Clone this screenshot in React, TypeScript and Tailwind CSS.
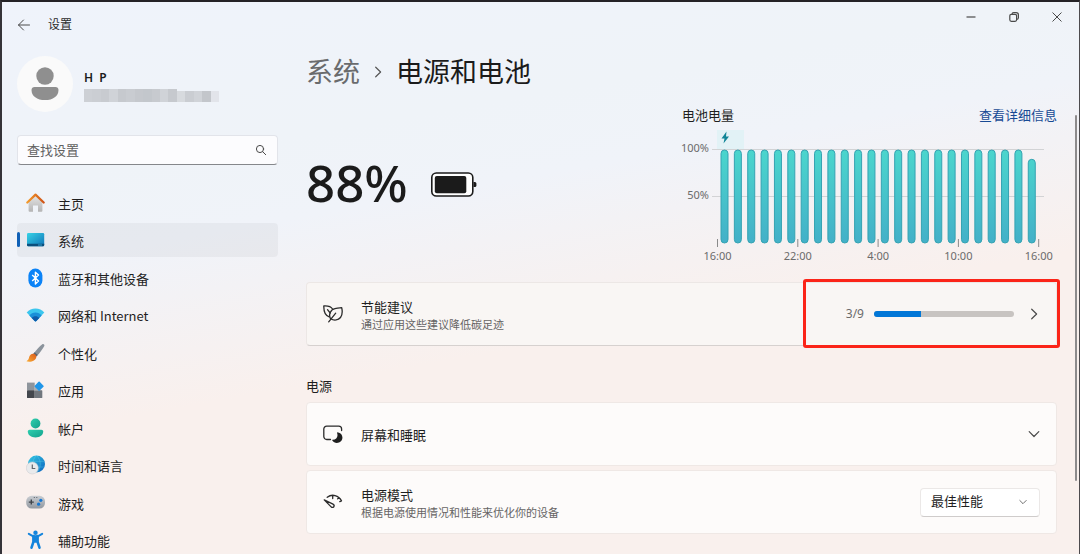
import { useState, type ReactNode } from 'react';
import clsx from 'clsx';

interface NavItem {
  id: string;
  label: string;
  icon: ReactNode;
}

const NAV_ITEMS: NavItem[] = [
  { id: 'home', label: '主页', icon: <HomeIcon /> },
  { id: 'system', label: '系统', icon: <SystemIcon /> },
  { id: 'bluetooth', label: '蓝牙和其他设备', icon: <BluetoothIcon /> },
  { id: 'network', label: '网络和 Internet', icon: <NetworkIcon /> },
  { id: 'personalization', label: '个性化', icon: <BrushIcon /> },
  { id: 'apps', label: '应用', icon: <AppsIcon /> },
  { id: 'accounts', label: '帐户', icon: <AccountIcon /> },
  { id: 'time', label: '时间和语言', icon: <TimeIcon /> },
  { id: 'gaming', label: '游戏', icon: <GamingIcon /> },
  { id: 'accessibility', label: '辅助功能', icon: <AccessibilityIcon /> },
];

// Battery level for each of the last 24 hours
const LEVELS = [...Array(23).fill(100), 90];
const TIME_LABELS = ['16:00', '22:00', '4:00', '10:00', '16:00'];

// Mosaic tiles that hide the account's mail address
const MASK_TILES = ['bg-[#cdd0d5]', 'bg-[#cbced3]', 'bg-[#c8cbd0]', 'bg-[#d0d3d8]', 'bg-[#c6c9ce]', 'bg-[#c9ccd1]', 'bg-[#c5c8cd]', 'bg-[#c3c7cc]', 'bg-[#c7cacf]', 'bg-[#d0d3d8]', 'bg-[#c6c9ce]', 'bg-[#d7dade]', 'bg-[#cacdd2]', 'bg-[#d0d3d8]', 'bg-[#c3c6cb]', 'bg-[#e2e4ea]'];

function HomeIcon() {
  return (
    <svg viewBox="0 0 20 20" className="h-5 w-5">
      <defs>
        <linearGradient id="homeBody" x1="0" y1="0" x2="0" y2="1">
          <stop offset="0" stopColor="#e6e6e6" />
          <stop offset="1" stopColor="#b4b4b4" />
        </linearGradient>
        <linearGradient id="homeRoof" x1="0" y1="0" x2="1" y2="0">
          <stop offset="0" stopColor="#f39a2b" />
          <stop offset="1" stopColor="#cf5316" />
        </linearGradient>
      </defs>
      <path d="M2.6 8.6 9.5 2l6.9 6.6v9.2a1 1 0 0 1-1 1H12v-6.2H7v6.2H3.600a1 1 0 0 1-1-1z" fill="url(#homeBody)" />
      <path d="M1.300 9.500 9.500 1.600l8.200 7.900" fill="none" stroke="url(#homeRoof)" strokeWidth="2.200" strokeLinecap="round" strokeLinejoin="round" />
    </svg>
  );
}

function SystemIcon() {
  return (
    <svg viewBox="0 0 20 20" className="h-5 w-5">
      <defs>
        <linearGradient id="sysScreen" x1="0" y1="0" x2="1" y2="1">
          <stop offset="0" stopColor="#37d3e6" />
          <stop offset="1" stopColor="#0f74b8" />
        </linearGradient>
      </defs>
      <rect x="1" y="3" width="17.200" height="13.200" rx="1.200" fill="url(#sysScreen)" />
      <path d="M1 13.800h17.200V15a1.200 1.200 0 0 1-1.200 1.200H2.200A1.200 1.200 0 0 1 1 15z" fill="#0c4f7c" />
      <path d="M12 15h4" stroke="#3bb4e0" strokeWidth=".8" />
    </svg>
  );
}

function BluetoothIcon() {
  return (
    <svg viewBox="0 0 20 20" className="h-5 w-5">
      <rect x="2.400" y=".6" width="14" height="19" rx="7" fill="#0b83f7" />
      <path d="m6.200 7 6.300 6-3.100 2.900V4.200l3.100 2.900-6.300 6" fill="none" stroke="#fff" strokeWidth="1.400" strokeLinejoin="round" />
    </svg>
  );
}

function NetworkIcon() {
  return (
    <svg viewBox="0 0 20 20" className="h-5 w-5">
      <path d="M.7 7.600C3 5 6 3.500 9.500 3.500s6.500 1.500 8.800 4.100L10.300 16.100a1.100 1.100 0 0 1-1.600 0z" fill="#3cc6ee" />
      <path d="M3.300 10.400C5 8.600 7 7.500 9.500 7.500s4.500 1.100 6.200 2.900l-5.400 5.700a1.100 1.100 0 0 1-1.600 0z" fill="#1a8fd8" />
      <path d="M5.700 12.900c1-1.100 2.300-1.700 3.800-1.700s2.800.6 3.800 1.700l-3 3.200a1.100 1.100 0 0 1-1.600 0z" fill="#0f5ba9" />
    </svg>
  );
}

function BrushIcon() {
  return (
    <svg viewBox="0 0 20 20" className="h-5 w-5">
      <defs>
        <linearGradient id="brushTip" x1="0" y1="1" x2="1" y2="0">
          <stop offset="0" stopColor="#f9ad35" />
          <stop offset="1" stopColor="#dc5a1c" />
        </linearGradient>
      </defs>
      <path d="M16.300 1.200c1.100-.8 2.700.4 2 1.900-1.500 3-4.300 6.700-7.400 9.800l-3-2.700c2.600-3.300 5.600-6.800 8.400-9z" fill="#8b939c" />
      <path d="m8.600 9.300 3.100 2.800-1.600 1.600-3-2.800z" fill="#5c646e" />
      <path d="M7 10.800c1.800-.2 3.500 1.300 3.300 3.100-.3 3.200-4.500 5.300-9.200 4.600-.5-.1-.5-.6-.1-.8 1.500-.8 1.700-2 2.200-3.700.5-1.900 1.900-3 3.800-3.200z" fill="url(#brushTip)" />
    </svg>
  );
}

function AppsIcon() {
  return (
    <svg viewBox="0 0 20 20" className="h-5 w-5">
      <rect x="1" y="2.600" width="7.700" height="7.700" fill="#8f959c" />
      <rect x="1" y="10.300" width="7.700" height="7.700" rx=".6" fill="#43474d" />
      <rect x="8.700" y="10.300" width="7.600" height="7.700" rx=".6" fill="#71777e" />
      <rect x="8.700" y="6" width="4" height="4.300" fill="#a9aeb4" />
      <rect x="9.600" y="2.700" width="7" height="7" rx=".8" transform="rotate(45 13.100 6.200)" fill="#2196e8" />
    </svg>
  );
}

function AccountIcon() {
  return (
    <svg viewBox="0 0 20 20" className="h-5 w-5">
      <defs>
        <linearGradient id="account" x1="0" y1="0" x2="1" y2="1">
          <stop offset="0" stopColor="#2fcfae" />
          <stop offset="1" stopColor="#12a08c" />
        </linearGradient>
      </defs>
      <circle cx="9.500" cy="5.500" r="4.900" fill="url(#account)" />
      <path d="M3.600 11.800h11.800c1.100 0 1.800.8 1.800 1.800 0 3.600-3.300 5.900-7.700 5.900s-7.700-2.300-7.700-5.900c0-1 .7-1.800 1.800-1.800z" fill="url(#account)" />
    </svg>
  );
}

function TimeIcon() {
  return (
    <svg viewBox="0 0 20 20" className="h-5 w-5">
      <defs>
        <linearGradient id="globe" x1="0" y1="0" x2="1" y2="1">
          <stop offset="0" stopColor="#36c9e4" />
          <stop offset="1" stopColor="#0b62bd" />
        </linearGradient>
      </defs>
      <circle cx="10.500" cy="9" r="8.500" fill="url(#globe)" />
      <path d="M3 6.300h15M2.500 12h16M10.500.5c-5 4.500-5 12.500 0 17M10.500.5c5 4.500 5 12.500 0 17" fill="none" stroke="#6fdcf2" strokeWidth=".6" opacity=".5" />
      <circle cx="6.300" cy="13" r="6" fill="#e9eaec" stroke="#c9cbce" strokeWidth=".5" />
      <path d="M6.300 9.600v3.900h3" fill="none" stroke="#60656b" strokeWidth="1.200" />
    </svg>
  );
}

function GamingIcon() {
  return (
    <svg viewBox="0 0 20 20" className="h-5 w-5">
      <defs>
        <linearGradient id="pad" x1="0" y1="0" x2="0" y2="1">
          <stop offset="0" stopColor="#c9cdd2" />
          <stop offset="1" stopColor="#9298a0" />
        </linearGradient>
      </defs>
      <rect x=".2" y="2.800" width="18.800" height="12.800" rx="5.500" fill="url(#pad)" />
      <path d="M5.300 6.600v5M2.800 9.100h5" stroke="#3f444a" strokeWidth="1.400" />
      <circle cx="14.800" cy="7.300" r="1.600" fill="#1477d4" />
      <circle cx="12.600" cy="11.200" r="1.600" fill="#1477d4" />
      <path d="M7.800 4.500h1M10.300 4.500h1" stroke="#5a6067" strokeWidth="1" />
    </svg>
  );
}

function AccessibilityIcon() {
  return (
    <svg viewBox="0 0 20 20" className="h-5 w-5">
      <circle cx="9.500" cy="2.800" r="2.200" fill="#1484dc" />
      <path d="m2.800 3.800 4.500 2.500h4.400l4.500-2.500" fill="none" stroke="#1484dc" strokeWidth="2" strokeLinecap="round" strokeLinejoin="round" />
      <path d="M7.500 6v5.600l-2 6.100M11.500 6v5.600l2 6.100" fill="none" stroke="#1484dc" strokeWidth="2.600" strokeLinecap="round" />
      <path d="M6.500 5.800h6v6.600l-3 .4-3-.4z" fill="#1484dc" />
    </svg>
  );
}

function Chevron({ direction, className }: { direction: 'right' | 'down'; className?: string }) {
  return (
    <svg viewBox="0 0 12 12" className={clsx('shrink-0', className)} fill="none" stroke="currentColor" strokeWidth="1.200" strokeLinecap="round" strokeLinejoin="round">
      <path d={direction === 'right' ? 'm3.700 1.200 4.900 4.800-4.900 4.800' : 'M1.200 3.700 6 8.500l4.800-4.800'} />
    </svg>
  );
}

function LeafIcon() {
  return (
    <svg viewBox="0 0 20 20" className="h-5 w-5 shrink-0" fill="none" stroke="#2b2b2b" strokeWidth="1.300" strokeLinecap="round" strokeLinejoin="round">
      <path d="M6.200 12.800C2.300 11.700.7 8 .8 2c3.400-.2 7 .2 8.700 3" />
      <path d="M7.500 14.800C5.200 10.300 7.900 5.100 12 4.600c2.500-.3 4-1 6.700-1 .8 3.600.6 7.600-1.200 9.900-2.200 2.700-6.300 3.300-10 1.300z" />
      <path d="m5.700 17.800 7-8.600M4.500 5.700l2.700 3.300" />
    </svg>
  );
}

function ScreenSleepIcon() {
  return (
    <svg viewBox="0 0 20 20" className="h-5 w-5 shrink-0">
      <path d="M7.500 15.500H3.700A2.900 2.900 0 0 1 .8 12.600V5a2.900 2.900 0 0 1 2.900-2.900h12A2.900 2.900 0 0 1 18.600 5v1.500" fill="none" stroke="#2b2b2b" strokeWidth="1.300" strokeLinecap="round" />
      <path d="M14.600 8.200c4.700.6 6.300 5.700 3.300 9-2.500 2.600-6.800 2.200-8.600-.7-.2-.4 0-.7.4-.7 3.700 0 5.700-3 4.400-6.900-.1-.4.100-.7.500-.7z" fill="#1f1f1f" />
    </svg>
  );
}

function GaugeIcon() {
  return (
    <svg viewBox="0 0 20 20" className="h-5 w-5 shrink-0" fill="none" stroke="#2b2b2b" strokeWidth="1.300" strokeLinecap="round" strokeLinejoin="round">
      <path d="M4.200 5.300c4.700-3.700 11.500-2.200 14.300 3.500l-1.700.8M9.700 3.500v3M15.800 5.700l-1.200 1.200" />
      <path d="M1.200 7.900 10 12.100c2.300 1.300.6 4.300-1.600 3z" />
    </svg>
  );
}

function BatteryIcon() {
  return (
    <svg viewBox="0 0 48 28" className="h-7 w-12">
      <rect x="1.800" y="2" width="41" height="23" rx="4.500" fill="#fff" stroke="#1b1b1b" strokeWidth="1.600" />
      <rect x="4.800" y="5" width="31.500" height="17.200" rx="2" fill="#1b1b1b" />
      <path d="M43.500 11h1.400a1.500 1.500 0 0 1 1.500 1.500v2a1.500 1.500 0 0 1-1.500 1.500h-1.400z" fill="#1b1b1b" />
    </svg>
  );
}

function BatteryChart() {
  return (
    <svg viewBox="0 0 375 140" className="block h-[140px] w-[375px] overflow-visible text-[11px]" role="img">
      <defs>
        <linearGradient id="bar" gradientUnits="userSpaceOnUse" x1="0" y1="25" x2="0" y2="119">
          <stop offset="0" stopColor="#4bd6cd" />
          <stop offset="1" stopColor="#43b0c8" />
        </linearGradient>
      </defs>
      <rect x="35" y="6" width="27" height="19" fill="#e2f2f6" />
      <path d="M44.500 7.500 39.500 14.500h3l-1 5 5.500-7h-3z" fill="#108597" />
      <path d="M30 25.500h332M30 72.500h332" stroke="#d2d3d5" />
      {LEVELS.map((level, i) => {
        const height = (level / 100) * 93;
        return (
          <rect
            key={i}
            x={39 + i * 13.36}
            y={119 - height}
            width="7"
            height={height}
            rx="3.500"
            fill="url(#bar)"
            stroke="#35a3b2"
          />
        );
      })}
      <g fill="#6b6b6b">
        <text x="27" y="28" textAnchor="end">100%</text>
        <text x="27" y="75" textAnchor="end">50%</text>
        {TIME_LABELS.map((label, i) => (
          <g key={i}>
            <path d={`M${35.500 + i * 80.300} 115v8`} stroke="#8a8a8a" />
            <text x={35.500 + i * 80.300} y="136" textAnchor="middle">{label}</text>
          </g>
        ))}
      </g>
    </svg>
  );
}

function TitleBar() {
  return (
    <header className="flex h-[54px] shrink-0 items-start justify-between">
      <div className="flex h-[46px] items-center gap-[17px] pl-[15px]">
        <button aria-label="返回" className="text-[#4a4a4a]">
          <svg viewBox="0 0 14 14" className="h-[14px] w-[14px]" fill="none" stroke="currentColor" strokeLinecap="round" strokeLinejoin="round">
            <path d="M12.500 7h-11M6.500 2l-5 5 5 5" />
          </svg>
        </button>
        <span className="text-[12px] leading-4 text-[#2b2b2b]">设置</span>
      </div>
      <div className="flex pr-px text-[#4a4a4a]">
        <button aria-label="最小化" className="flex h-[30px] w-[43px] items-center justify-center">
          <svg viewBox="0 0 12 12" className="h-3 w-3" fill="none" stroke="currentColor" strokeWidth="1.200">
            <path d="M1.500 6h9" />
          </svg>
        </button>
        <button aria-label="还原" className="flex h-[30px] w-[43px] items-center justify-center">
          <svg viewBox="0 0 12 12" className="h-3 w-3" fill="none" stroke="currentColor" strokeWidth="1.200">
            <rect x="1.800" y="3.300" width="6.800" height="7" rx="1.500" />
            <path d="M4 3.200c.1-.9.700-1.500 1.600-1.500h2.600c1.300 0 2.200.9 2.200 2.200v2.900c0 .9-.6 1.500-1.600 1.600" />
          </svg>
        </button>
        <button aria-label="关闭" className="flex h-[30px] w-[43px] items-center justify-center">
          <svg viewBox="0 0 12 12" className="h-3 w-3" fill="none" stroke="currentColor">
            <path d="m1.500 1.500 9 9M10.500 1.500l-9 9" />
          </svg>
        </button>
      </div>
    </header>
  );
}

function Sidebar() {
  const [active, setActive] = useState('system');

  return (
    <aside className="w-[261px] shrink-0">
      <div className="flex items-center gap-[11px]">
        <div className="flex h-14 w-14 items-center justify-center rounded-full bg-[#fafafa]">
          <svg viewBox="0 0 28 34" className="h-[34px] w-7" fill="#8f8f8f">
            <circle cx="14" cy="9" r="8.700" />
            <path d="M3.500 20h21c1.700 0 3 1.200 3 2.900C27.500 29 22 33 14 33S.5 29 .5 22.900C.5 21.200 1.800 20 3.500 20z" />
          </svg>
        </div>
        <div className="pt-[3px]">
          <div className="text-[12px] leading-4 font-semibold text-[#1b1b1b]">H&nbsp;&nbsp;P</div>
          <div className="mt-[3px] flex h-[13px] w-[135px]">
            {MASK_TILES.map((color, i) => (
              <span key={i} className={clsx('flex-1', color, i > 10 && 'mt-[2px]')} />
            ))}
          </div>
        </div>
      </div>

      <label className="mt-[23px] flex h-[30px] items-center rounded border border-[#e2e4ea] border-b-[#85878b] bg-[#fcfcfe] pr-[10px] pl-[9px]">
        <input
          type="text"
          aria-label="查找设置"
          placeholder="查找设置"
          className="min-w-0 flex-1 bg-transparent text-[13px] leading-[18px] text-[#1b1b1b] outline-none placeholder:text-[#616161]"
        />
        <svg viewBox="0 0 12 12" className="h-3 w-3" fill="none" stroke="#4a4a4a" strokeLinecap="round">
          <circle cx="5" cy="5" r="3.600" />
          <path d="m7.700 7.700 3 3" />
        </svg>
      </label>

      <nav className="mt-[21px]">
        {NAV_ITEMS.map((item) => (
          <button
            key={item.id}
            onClick={() => setActive(item.id)}
            className={clsx(
              "relative flex h-[34px] w-full items-center gap-3 rounded pl-[9px] text-left font-['Noto_Sans_CJK_SC',sans-serif] text-[13px] leading-[18px] text-[#1f1f1f] odd:mb-[3px] even:mb-1",
              active === item.id && 'bg-black/[0.04]'
            )}
          >
            {active === item.id && (
              <span className="absolute top-[9px] left-0 h-[15px] w-[3px] rounded-full bg-[#0f60b6]" />
            )}
            {item.icon}
            <span className="pt-px">{item.label}</span>
          </button>
        ))}
      </nav>
    </aside>
  );
}

function CardText({ title, detail }: { title: string; detail?: string }) {
  return (
    <span className="flex min-w-0 flex-1 flex-col pt-[3px]">
      <span className="text-[13px] leading-[17px] text-[#1f1f1f]">{title}</span>
      {detail && <span className="text-[11px] leading-[17px] text-[#666464]">{detail}</span>}
    </span>
  );
}

export default function App() {
  const [mode, setMode] = useState('最佳性能');

  return (
    <div className="relative flex h-screen flex-col overflow-hidden border-t-2 border-r border-l-2 border-t-[#242226] border-r-[#4d4b4e] border-l-[#353338] bg-[linear-gradient(170deg,#eff3fb_0%,#eff3f8_25%,#f0f3f9_36%,#f9f0ed_59%,#f9f0ed_100%)] font-['Noto_Sans','Noto_Sans_CJK_SC',sans-serif]">
      <TitleBar />
      <div className="flex min-h-0 flex-1 gap-7 pl-[15px]">
        <Sidebar />

        <main className="min-w-0 flex-1 pr-[22px]">
          <h1 className="flex items-center text-[27px] leading-8 text-[#1b1b1b]">
            <a href="#system" className="text-[#6a6b6d]">系统</a>
            <Chevron direction="right" className="mx-3 h-3 w-3 text-[#555]" />
            电源和电池
          </h1>

          <section className="mt-[18px] flex items-center justify-between">
            <div className="flex items-center gap-[22px]">
              <span className="pb-[6px] text-[51px] leading-[60px] font-medium text-[#1b1b1b]">88%</span>
              <BatteryIcon />
            </div>
            <div>
              <div className="flex justify-between text-[13px] leading-[18px] text-[#1f1f1f]">
                <h2>电池电量</h2>
                <a href="#details" className="text-[#174a94]">查看详细信息</a>
              </div>
              <BatteryChart />
            </div>
          </section>

          <div className="relative mt-[18px]">
            <button className="flex h-16 w-full items-center rounded border border-[#ece7e5] border-b-[#d6d1cf] bg-[#f9f6f4] px-4 text-left">
              <LeafIcon />
              <span className="w-[18px]" />
              <CardText title="节能建议" detail="通过应用这些建议降低碳足迹" />
              <span className="text-[12px] leading-4 text-[#6b6b6b]">3/9</span>
              <span className="mx-[10px] flex h-[6px] w-[140px] overflow-hidden rounded-full bg-[#c8c4c1]">
                <span className="w-1/3 bg-[#0277d7]" />
              </span>
              <Chevron direction="right" className="ml-1 h-3 w-3 text-[#4a4a4a]" />
            </button>
            <div className="pointer-events-none absolute -top-[3px] -right-[3px] -bottom-[2px] w-[257px] rounded-[3px] border-[3px] border-[#fb2418]" />
          </div>

          <h2 className="mt-[31px] text-[13px] leading-[18px] text-[#1f1f1f]">电源</h2>

          <div className="mt-[7px] flex flex-col gap-1">
            <button className="flex h-16 items-center gap-[18px] rounded border border-[#efe8e5] bg-[#fdfbfa] px-4 text-left">
              <ScreenSleepIcon />
              <CardText title="屏幕和睡眠" />
              <Chevron direction="down" className="h-3 w-3 text-[#4a4a4a]" />
            </button>
            <div className="flex h-16 items-center gap-[18px] rounded border border-[#efe8e5] bg-[#fdfbfa] px-4">
              <GaugeIcon />
              <label htmlFor="power-mode" className="flex min-w-0 flex-1">
                <CardText title="电源模式" detail="根据电源使用情况和性能来优化你的设备" />
              </label>
              <div className="relative">
                <select
                  id="power-mode"
                  value={mode}
                  onChange={(e) => setMode(e.target.value)}
                  className="h-[29px] w-[120px] appearance-none rounded border border-[#ebe8e7] border-b-[#cfcccb] bg-white pl-[10px] text-[13px] text-[#1f1f1f]"
                >
                  <option>最佳能效</option>
                  <option>平衡</option>
                  <option>最佳性能</option>
                </select>
                <Chevron direction="down" className="pointer-events-none absolute top-[10px] right-[13px] h-2 w-2 text-[#4a4a4a]" />
              </div>
            </div>
          </div>
        </main>
      </div>
      {/* Scroll thumb */}
      <div className="absolute top-[113px] right-[2px] h-[366px] w-[2px] rounded-full bg-[#8d8b8c]" />
    </div>
  );
}
